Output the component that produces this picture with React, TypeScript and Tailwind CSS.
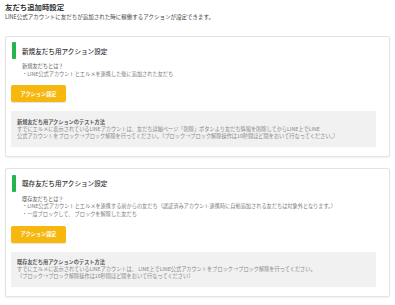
import React from 'react';

interface Section {
  title: string;
  whatLabel: string;
  whatLines: string[];
  testTitle: string;
  testLines: string[];
}

const sections: Section[] = [
  {
    title: '新規友だち用アクション設定',
    whatLabel: '新規友だちとは？',
    whatLines: ['・LINE公式アカウントとエルメを連携した後に追加された友だち'],
    testTitle: '新規友だち用アクションのテスト方法',
    testLines: [
      'すでにエルメに表示されているLINEアカウントは、友だち詳細ページ「削除」ボタンより友だち情報を削除してからLINE上でLINE',
      '公式アカウントをブロック→ブロック解除を行ってください。（ブロック→ブロック解除操作は10秒間ほど間をおいて行なってください。）',
    ],
  },
  {
    title: '既存友だち用アクション設定',
    whatLabel: '既存友だちとは？',
    whatLines: [
      '・LINE公式アカウントとエルメを連携する前からの友だち（認証済みアカウント連携時に自動追加される友だちは対象外となります。）',
      '・一度ブロックして、 ブロックを解除した友だち',
    ],
    testTitle: '既存友だち用アクションのテスト方法',
    testLines: [
      'すでにエルメに表示されているLINEアカウントは、 LINE上でLINE公式アカウントをブロック→ブロック解除を行ってください。',
      '（ブロック→ブロック解除操作は10秒間ほど間をおいて行なってください）',
    ],
  },
];

const ActionCard: React.FC<{ section: Section; className?: string }> = ({ section, className }) => {
  return (
    <div
      className={`border border-[#e3e3e3] bg-white rounded-[2px] shadow-[0_1px_2px_rgba(0,0,0,0.06)] px-[5px] pb-[9px] ${className || ''}`}
    >
      {/* heading with green bar */}
      <div className="flex items-center h-[17px] pl-[1px]">
        <div className="w-[4px] h-[17px] bg-[#27b34f] rounded-[1px]" />
        <h2 className="ml-[6px] text-[6.6px] leading-[8px] font-medium text-[#333]">{section.title}</h2>
      </div>
      <div className="pl-[11px] mt-[3px] text-[5.2px] leading-[7.5px] text-[#777]">
        <p className="text-[#555]">{section.whatLabel}</p>
        {section.whatLines.map((line) => (
          <p key={line} className="whitespace-nowrap">
            {line}
          </p>
        ))}
      </div>
      <button
        type="button"
        className="mt-[8px] w-[55px] h-[17px] bg-[#f6b80f] rounded-[2px] text-white text-[5.2px] font-bold shadow-[0_1px_1px_rgba(0,0,0,0.12)]"
      >
        アクション設定
      </button>
      <div className="mt-[9px] mr-[8px] bg-[#f1f1f1] pl-[6px] pt-[6.5px] pb-[8px] text-[5.2px] leading-[7px] text-[#888]">
        <p className="font-bold text-[#555]">{section.testTitle}</p>
        {section.testLines.map((line) => (
          <p key={line} className="whitespace-nowrap">
            {line}
          </p>
        ))}
      </div>
    </div>
  );
};

export default function App() {
  return (
    <div
      className="w-[395px] h-[305px] bg-white px-[5px] pt-[2px] overflow-hidden"
      style={{ fontFamily: '"Noto Sans CJK JP", "Noto Sans", sans-serif' }}
    >
      <h1 className="text-[7.4px] leading-[9px] font-bold text-[#333]">友だち追加時設定</h1>
      <p className="mt-[3px] text-[5.5px] leading-[7px] text-[#444]">
        LINE公式アカウントに友だちが追加された時に稼働するアクションが設定できます。
      </p>
      <ActionCard section={sections[0]} className="mt-[15px] pt-[5px]" />
      <ActionCard section={sections[1]} className="mt-[11px] pt-[6px]" />
    </div>
  );
}
